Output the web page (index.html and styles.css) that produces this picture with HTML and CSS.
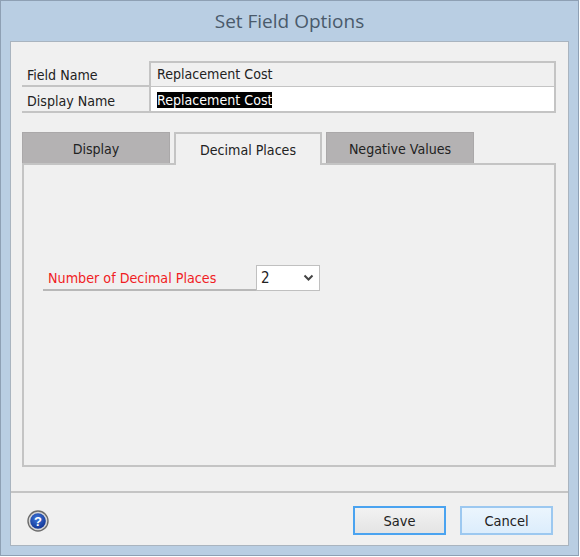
FILE: index.html
```html
<!DOCTYPE html>
<html lang="en">
<head>
<meta charset="utf-8">
<title>Set Field Options</title>
<link rel="stylesheet" href="styles.css">
</head>
<body>
<div class="window">
  <h1 class="title">Set Field Options</h1>
  <div class="panel">
    <div class="content">
      <div class="fields">
        <div class="row">
          <div class="label">Field Name</div>
          <div class="value readonly">Replacement Cost</div>
        </div>
        <div class="row">
          <div class="label">Display Name</div>
          <div class="value editable"><span class="selected">Replacement Cost</span></div>
        </div>
      </div>
      <div class="tabs">
        <div class="tab">Display</div>
        <div class="tab active">Decimal Places</div>
        <div class="tab">Negative Values</div>
      </div>
      <div class="tabpanel">
        <div class="option">
          <div class="option-label">Number of Decimal Places</div>
          <div class="select">
            <span>2</span>
            <svg class="chevron" width="11" height="8" viewBox="0 0 11 8"><path d="M1.5 1.5 L5.5 5.5 L9.5 1.5" fill="none" stroke="#444" stroke-width="2"/></svg>
          </div>
        </div>
      </div>
    </div>
    <div class="footer">
      <svg class="help" width="22" height="22" viewBox="0 0 22 22">
        <defs>
          <radialGradient id="blue" cx="45%" cy="35%" r="70%">
            <stop offset="0" stop-color="#3f78dc"/>
            <stop offset="1" stop-color="#10308f"/>
          </radialGradient>
        </defs>
        <circle cx="11" cy="11" r="10" fill="#d8d8d8" stroke="#6c6c6c" stroke-width="1.4"/>
        <circle cx="11" cy="11" r="7.8" fill="url(#blue)"/>
        <text x="11" y="16" class="help-mark">?</text>
      </svg>
      <div class="buttons">
        <div class="btn save">Save</div>
        <div class="btn cancel">Cancel</div>
      </div>
    </div>
  </div>
</div>
</body>
</html>
```
FILE: styles.css
```css
html, body {
  margin: 0;
  padding: 0;
  background: #ffffff;
}
.window {
  box-sizing: border-box;
  width: 579px;
  height: 556px;
  padding: 0 9px 9px 9px;
  background: #b9cee3;
  border: 1px solid #8ea0b4;
  display: flex;
  flex-direction: column;
  font-family: "DejaVu Sans", "Liberation Sans", sans-serif;
  font-stretch: condensed;
  color: #222;
}
.title {
  margin: 0;
  height: 40px;
  line-height: 41px;
  text-align: center;
  font-family: "Open Sans", sans-serif;
  font-stretch: normal;
  font-size: 19px;
  font-weight: 400;
  color: #4a5a6b;
}
.panel {
  flex: 1;
  display: flex;
  flex-direction: column;
  background: #f0f0f0;
  border: 1px solid #a9b4bf;
  box-sizing: border-box;
}
.content {
  flex: 1;
  padding: 19px 12px 24px 11px;
  border-bottom: 2px solid #c4c4c4;
  display: flex;
  flex-direction: column;
}
.fields {
  display: flex;
  flex-direction: column;
}
.row {
  display: flex;
  height: 26px;
  font-size: 14.1px;
}
.label {
  width: 127px;
  padding-left: 5px;
  box-sizing: border-box;
  line-height: 29px;
  border-bottom: 2px solid #c4c4c4;
}
.value {
  flex: 1;
  box-sizing: border-box;
  padding-left: 6px;
  border: 2px solid #c4c4c4;
  line-height: 23px;
}
.readonly {
  height: 27px;
  background: #f0f0f0;
}
.editable {
  background: #ffffff;
  border-top: 0;
  line-height: 27px;
}
.selected {
  background: #000000;
  color: #ffffff;
}
.tabs {
  display: flex;
  gap: 4px;
  margin-top: 19px;
  height: 31px;
  position: relative;
  z-index: 1;
  font-size: 14.1px;
}
.tab {
  box-sizing: border-box;
  width: 148px;
  height: 31px;
  text-align: center;
  line-height: 33px;
  background: #b4b2b3;
  border: 1px solid #aaa8a9;
  border-bottom: 0;
}
.tab.active {
  height: 33px;
  background: #f0f0f0;
  border: 2px solid #c4c4c4;
  border-bottom: 0;
}
.tabpanel {
  flex: 1;
  box-sizing: border-box;
  border: 2px solid #c4c4c4;
  padding-top: 100px;
  padding-left: 19px;
}
.option {
  display: flex;
  align-items: flex-end;
}
.option-label {
  width: 213px;
  box-sizing: border-box;
  padding-left: 5px;
  height: 24px;
  line-height: 22px;
  font-size: 14.2px;
  color: #f01c24;
  border-bottom: 2px solid #b8b8b8;
}
.select {
  box-sizing: border-box;
  width: 64px;
  height: 26px;
  background: #ffffff;
  border: 1px solid #c0c0c0;
  padding: 0 5px 0 4px;
  display: flex;
  align-items: center;
  justify-content: space-between;
  font-size: 15px;
}
.footer {
  height: 52px;
  flex: none;
  box-sizing: border-box;
  padding: 3px 15px 0 16px;
  display: flex;
  align-items: center;
  justify-content: space-between;
}
.help {
  display: block;
}
.help-mark {
  font-family: "Liberation Sans", sans-serif;
  font-size: 13px;
  font-weight: 700;
  fill: #ffffff;
  text-anchor: middle;
}
.buttons {
  display: flex;
  gap: 14px;
}
.btn {
  box-sizing: border-box;
  width: 93px;
  height: 29px;
  text-align: center;
  line-height: 26px;
  font-size: 14.5px;
}
.save {
  border: 2px solid #4aa3f0;
  background: linear-gradient(#f2f2f2, #e4e4e4);
}
.cancel {
  border: 2px solid #9cc8f0;
  background: linear-gradient(#ebf5fd, #dcedfc);
}
```
